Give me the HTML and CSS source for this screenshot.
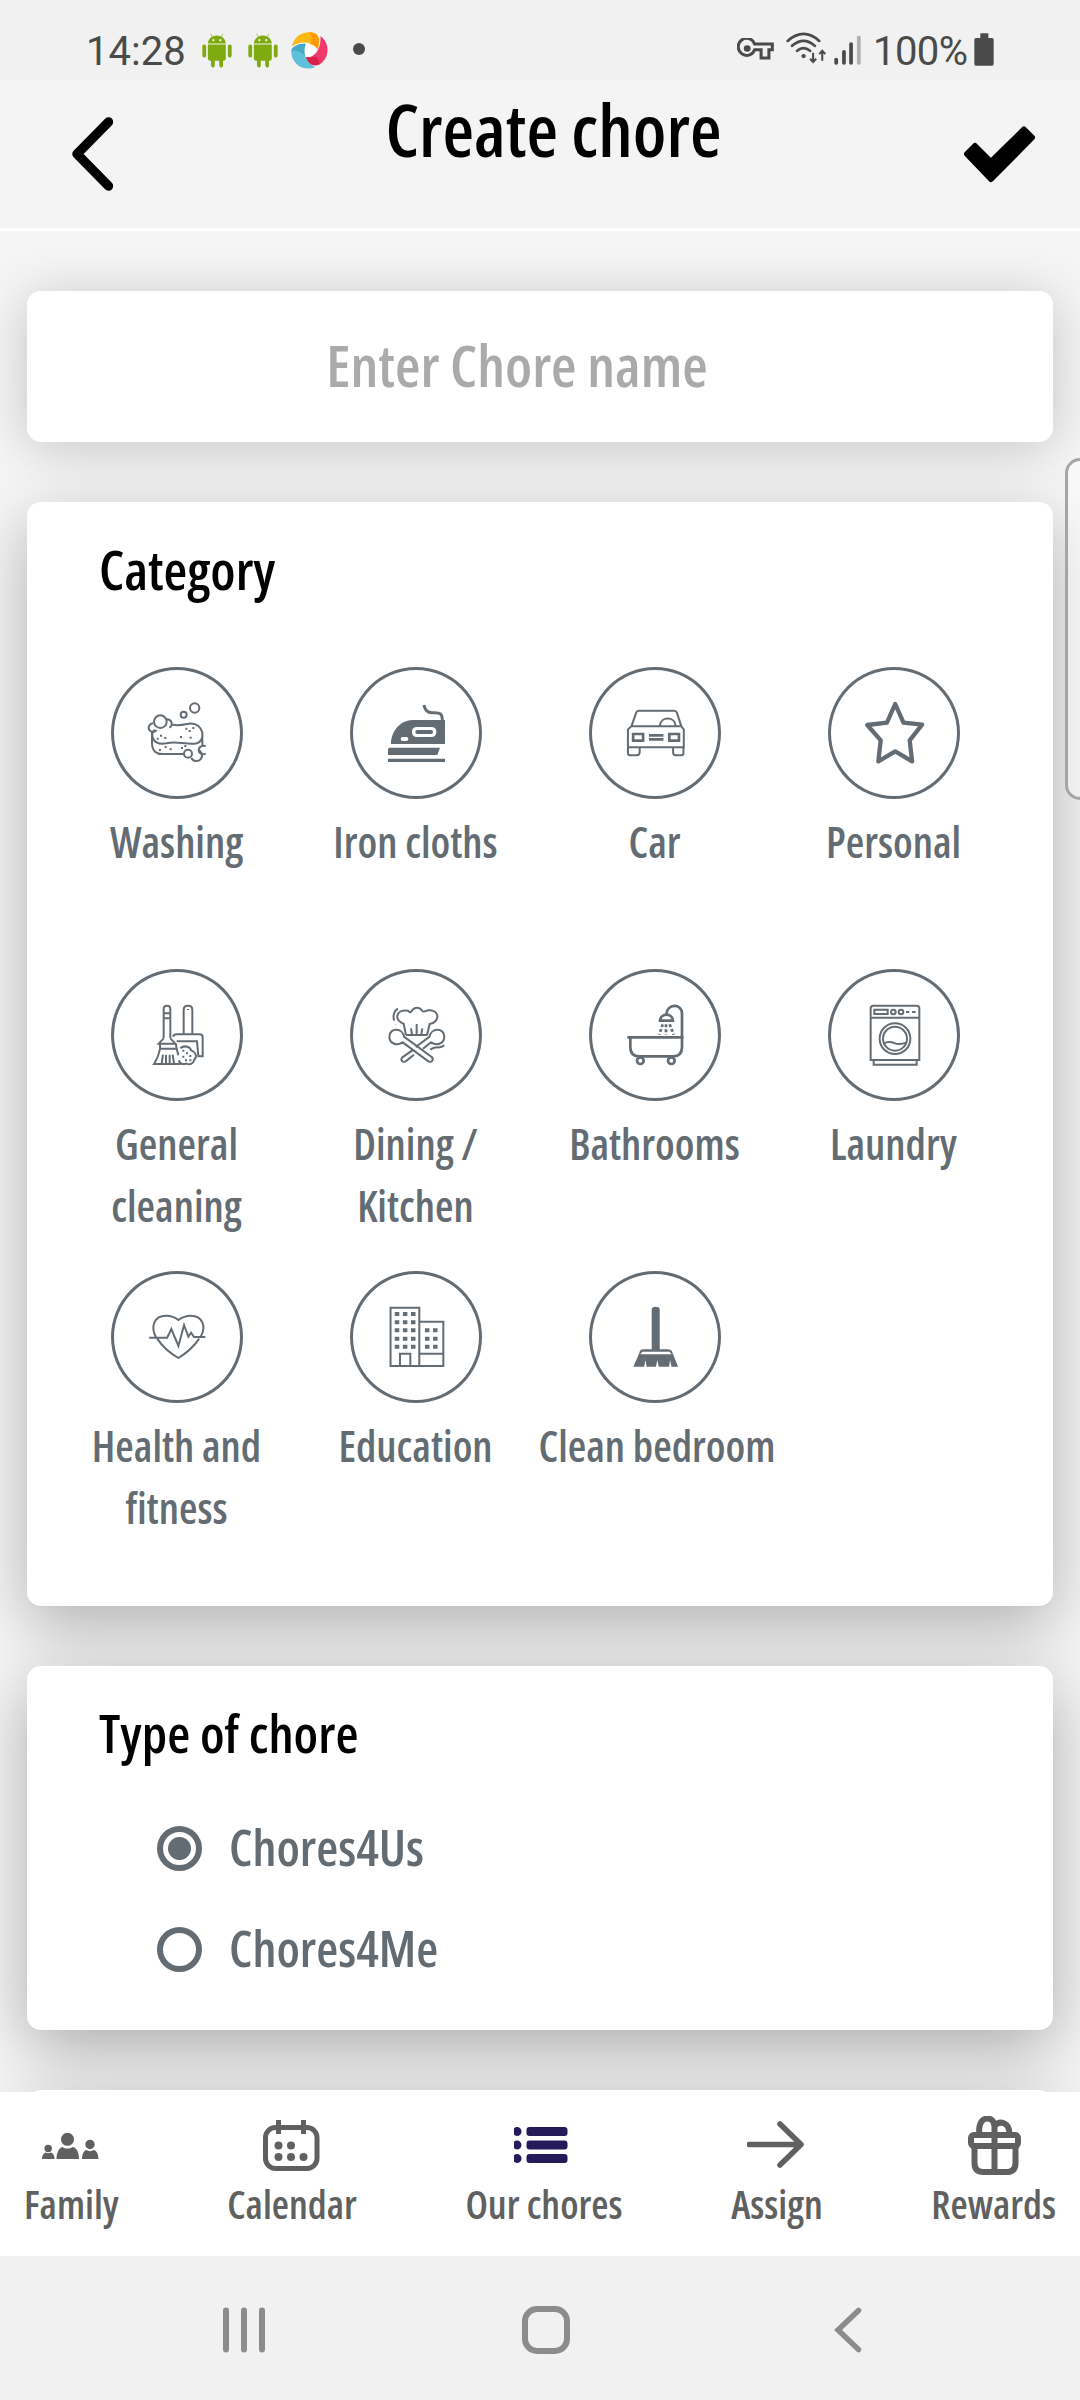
FILE: index.html
```
<!DOCTYPE html>
<html lang="en">
<head>
<meta charset="utf-8">
<title>Create chore</title>
<link rel="stylesheet" href="styles.css">
</head>
<body>
<div class="screen">
  <div class="statusbar">
    <span class="clock">14:28</span>
    <svg class="st-android" viewBox="587 98 87 103" preserveAspectRatio="none"><g fill="#80ab10"><path d="M604 129c2-32 50-32 52 0z"/><path d="M604 132h52v41q0 7-7 7h-1v14q0 6-5 6t-6-6v-14h-13v14q0 6-5 6t-6-6v-14h-2q-7 0-7-7z"/><rect x="588" y="132" width="11" height="38" rx="5"/><rect x="662" y="132" width="11" height="38" rx="5"/></g><path d="M612 100l5 9M648 100l-5 9" stroke="#80ab10" stroke-width="2"/><circle cx="620" cy="119" r="3" fill="#fff"/><circle cx="640" cy="119" r="3" fill="#fff"/></svg>
    <svg class="st-android st-android-2" viewBox="587 98 87 103" preserveAspectRatio="none"><g fill="#80ab10"><path d="M604 129c2-32 50-32 52 0z"/><path d="M604 132h52v41q0 7-7 7h-1v14q0 6-5 6t-6-6v-14h-13v14q0 6-5 6t-6-6v-14h-2q-7 0-7-7z"/><rect x="588" y="132" width="11" height="38" rx="5"/><rect x="662" y="132" width="11" height="38" rx="5"/></g><path d="M612 100l5 9M648 100l-5 9" stroke="#80ab10" stroke-width="2"/><circle cx="620" cy="119" r="3" fill="#fff"/><circle cx="640" cy="119" r="3" fill="#fff"/></svg>
    <svg class="st-swirl" viewBox="844 95 108 109" preserveAspectRatio="none"><circle cx="898" cy="150" r="40" fill="#fff"/><path d="M847 137c5-25 25-42 53-41 17 1 26 10 26 25 0 9-2 19-4 26-8-19-45-31-75-10z" fill="#fdb813"/><path d="M895 96c21-2 31 10 31 25 0 9-2 19-4 26-4-9-12-14-23-17 9-11 7-26-4-34z" fill="#ff9a04"/><path d="M930 107c30 22 26 68-4 84-17 8-37-2-38-22 20 4 45-18 42-62z" fill="#f0386b"/><path d="M888 169c12 4 24-3 32 1 6 6 5 15 8 20-19 8-39-1-40-21z" fill="#d81f4a"/><path d="M845 150c2-11 21-22 42-20-11 26 0 54 28 69-36 14-72-12-70-49z" fill="#5fc0da"/><path d="M845 150c2-11 21-22 42-20-6 14-5 25-1 35-13-11-24-18-41-15z" fill="#45aac4"/></svg>
    <span class="st-dot"></span>
    <span class="st-gap"></span>
    <svg class="st-key" viewBox="568 115 109 67" preserveAspectRatio="none"><path d="M620 133h52v18h-10v25h-23v-25h-19a25 26 0 1 1 0-18z" fill="none" stroke="#4a4a4a" stroke-width="9"/><circle cx="598" cy="147" r="10" fill="#4a4a4a"/></svg>
    <svg class="st-wifi" viewBox="709 97 121 97" preserveAspectRatio="none"><g fill="none" stroke="#4a4a4a" stroke-width="8" stroke-linecap="round"><path d="M714 124q47-42 93 0M727 139q34-30 67 0M742 154q18-16 38 0"/></g><circle cx="761" cy="170" r="6.500" fill="#4a4a4a"/><path d="M789 160v26M780 178l9 10 9-10M816 184v-28M807 164l9-10 9 10" fill="none" stroke="#4a4a4a" stroke-width="6"/></svg>
    <svg class="st-signal" viewBox="850 104 80 90" preserveAspectRatio="none"><g fill="#4a4a4a"><rect x="851" y="172" width="11" height="21" rx="5"/><rect x="874" y="149" width="11" height="44" rx="5"/><rect x="895" y="126" width="11" height="67" rx="5"/><rect x="918" y="106" width="11" height="87" rx="5" fill="#b0b0b0"/></g></svg>
    <span class="percent">100%</span>
    <svg class="st-battery" viewBox="1259 98 60 98" preserveAspectRatio="none"><path d="M1278 99h24v14h11q5 0 5 5v72q0 5-5 5h-48q-5 0-5-5v-72q0-5 5-5h13z" fill="#4a4a4a"/></svg>
  </div>

  <header class="header">
    <svg class="back" viewBox="72 114 44 80"><path d="M108.500 122L77 154l31.500 32" fill="none" stroke="#000" stroke-width="9.500" stroke-linecap="round" stroke-linejoin="round"/></svg>
    <h1 class="title">Create chore</h1>
    <svg class="check" viewBox="964 124 72 62"><path d="M967 154l8-8 16 16 33-32.500 8 8L991 179z" stroke="#000" stroke-width="6" stroke-linejoin="round"/></svg>
  </header>

  <main class="content">
    <section class="card card-name"><span class="placeholder">Enter Chore name</span></section>

    <section class="card card-category">
      <h2 class="heading">Category</h2>
      <div class="grid">
        <div class="cell"><div class="ring"><svg viewBox="93 81 396 396">
          <circle cx="344" cy="204" r="14"/><circle cx="311" cy="224" r="9"/><circle cx="241" cy="245" r="19"/><path d="M259 238c17 0 22 18 9 25M219 250a13 13 0 1 0 11 20"/>
          <path d="M277 254c19 4 34 0 49-3 50-5 54 58 18 60-32 2-56-8-84-1-46 9-51-34-35-40M216 276v34c0 22 13 34 35 32h60M367 279v36"/>
          <circle cx="324" cy="341" r="12"/><path d="M334 354a17 17 0 1 0 20-24M377 318c-15-4-25 8-19 19 4 5 12 7 19 4"/>
          <path class="dots" d="M319 266h0M329 273h0M340 264h0M303 291h0M332 293h0M243 287h0M233 296h0M256 294h0M257 321h0M240 330h0M272 328h0M306 324h0M316 318h0"/></svg></div><span class="label">Washing</span></div>
        <div class="cell"><div class="ring"><svg viewBox="810 81 396 396">
          <path class="fill" d="M933 312c0-38 28-72 65-72h97v72zM928 323h152l-8 22H924v-18zM924 356h171v10H924z"/><path class="w3" d="M1032 195c3 17 12 24 27 23 22-1 28 3 28 25"/><rect class="paper" x="996" y="261" width="73" height="30" rx="14"/><rect class="fill" x="1006" y="270" width="53" height="12" rx="6"/><rect class="paper" x="962" y="291" width="23" height="12" rx="6"/></svg></div><span class="label">Iron cloths</span></div>
        <div class="cell"><div class="ring"><svg viewBox="142 81 383 396" preserveAspectRatio="none">
          <path d="M265 259l14-41q2-6 7-6h103q6 0 8 6l13 41M265 259h145l7 9v54H255v-54zM348 256c2-27 43-27 45 0M255 322v18q0 6 6 6h19q9 0 9-9v-15M416 322v18q0 6-6 6h-16q-8 0-8-9v-15"/><path class="w2" d="M270 282h29v20h-29zM375 282h28v20h-28zM316 286h42M316 298h42"/></svg></div><span class="label">Car</span></div>
        <div class="cell"><div class="ring"><svg viewBox="836 81 383 396" preserveAspectRatio="none">
          <path class="w4" d="M1031 192l24 56 54 6-36 47 7 63-49-30-49 30 7-63-39-46 57-7z"/></svg></div><span class="label">Personal</span></div>

        <div class="cell"><div class="ring"><svg viewBox="93 87 396 396">
          <path d="M251 295v-88q0-10 10-10t10 10v88M251 220h20M251 235h20M251 295l-15 16h50l-15-16M240 311v15h50l-3-15M240 326c-4 20-10 34-18 46h80M249 344l-4 26M258 344v26M269 344v26M278 344l4 26M290 326l5 20"/>
          <path d="M311 283v-74q0-12 13-12t13 12v74M324 207v3M279 290q2-7 10-7h70q9 0 9 9v57h-13l-4-45h-61"/>
          <path d="M301 325c14-12 31-3 32 6 18 6 17 22 10 28-4 14-14 16-24 12-14 4-20-2-23-10"/><path class="dots" d="M310 332h0M321 340h0M331 348h0M310 350h0M318 361h0M331 361h0"/></svg></div><span class="label">General cleaning</span></div>
        <div class="cell"><div class="ring"><svg viewBox="810 87 396 396">
          <path d="M978 285l-7-34c-28-8-27-44 13-39 8 10 10 2 14-3 7-8 19-8 26 0 6 11 10 4 21 2 35-3 36 36 4 41l-8 34M978 285h64M993 265l3 18M1010 252v30M1027 265l-3 18M954 206c-13 6-16 25-11 36M947 252v1M1093 316c-14 13-22-1-42 13"/>
          <path d="M972 290c-3-26-43-29-44 0 1 23 24 28 40 17l77 57c10 5 18-5 10-13zM1049 290c3-26 43-29 44 0-1 23-24 28-40 17l-24 19M1049 290l-42 31M1002 344l-25 20c-10 5-17-5-10-12l30-21"/></svg></div><span class="label">Dining / Kitchen</span></div>
        <div class="cell"><div class="ring"><svg viewBox="147 87 396 396">
          <path class="w2" d="M262 292h169M271 293v28q0 28 27 28h102q26 0 26-28V220c0-30-46-30-47 3"/><path class="w2" d="M360 242c2-24 37-24 39 0z"/><circle class="w2" cx="301" cy="362" r="10"/><circle class="w2" cx="394" cy="362" r="10"/><path class="w2 dash" d="M368 253l-10 31M378 253v31M389 253l12 31"/></svg></div><span class="label">Bathrooms</span></div>
        <div class="cell"><div class="ring"><svg viewBox="864 87 396 396">
          <path d="M992 360V205q0-8 8-8h130q8 0 8 8v155zM992 233h146M1001 362v12h129v-12M1098 216h10M1116 216h11"/><rect x="1003" y="209" width="40" height="13"/><circle cx="1060" cy="216" r="7"/><circle cx="1083" cy="216" r="7"/><circle cx="1065" cy="296" r="46"/><circle cx="1065" cy="296" r="36"/><path d="M1030 311c14-8 25-5 35-1s20 3 36-3"/></svg></div><span class="label">Laundry</span></div>

        <div class="cell"><div class="ring"><svg viewBox="66 63 280 396" preserveAspectRatio="none">
          <path d="M162 263c-13-33-5-66 21-66q15 0 26 13 12-13 26-13c25 0 34 32 21 64M164 266q17 36 45 58 28-24 44-58M147 263h38l9-26 15 51 12-63 9 35 6-12 6 13h24"/></svg></div><span class="label">Health and fitness</span></div>
        <div class="cell"><div class="ring"><svg viewBox="572 63 280 396" preserveAspectRatio="none">
          <path d="M658 173h61v175h-61zM719 215h51v133h-51zM719 311h51M678 348v-37h22v37"/>
          <path class="panes" d="M667 192h46M667 217h46M667 241h46M667 266h46M667 290h46"/><path class="panes" d="M731 241h28M731 266h28M731 290h28"/></svg></div><span class="label">Education</span></div>
        <div class="cell"><div class="ring"><svg viewBox="1079 63 280 396" preserveAspectRatio="none">
          <path class="fill" d="M1212 298V178c0-10 17-10 17 0v120h16q9 0 11 10l12 42h-14l-3-20-2 20h-22l-3-20-3 20h-20l-2-20-3 20h-23l13-42q1-10 9-10z"/><path class="paper" d="M1192 305h58l4 8h-66z"/></svg></div><span class="label label-wide">Clean bedroom</span></div>
      </div>
    </section>

    <section class="card card-type">
      <h2 class="heading heading-type">Type of chore</h2>
      <div class="option"><span class="radio radio-on"></span><span class="option-text">Chores4Us</span></div>
      <div class="option"><span class="radio"></span><span class="option-text">Chores4Me</span></div>
    </section>

    <section class="card card-next"></section>
    <div class="edge-handle"></div>
  </main>

  <nav class="tabs">
    <div class="tab"><svg viewBox="41 2116 60 60"><g fill="#606060"><circle cx="67.500" cy="2139.300" r="6.500"/><path d="M56.500 2159c0-8 4-12 6-12 3 2 7 2 10 0 3 0 6.500 4 6.500 12z"/><circle cx="48.200" cy="2148.500" r="3.700"/><path d="M42 2159c0-4 2-6 3.500-6.500 2 1 3.500 1 5.500 0 2 .5 3.500 3 3.500 6.500zM82 2159c0-6 3-9 4.500-9 2 1.500 5 1.500 7 0 2 0 5 3 5 9z"/><circle cx="90" cy="2144.500" r="4.700"/></g></svg><span class="tab-text">Family</span></div>
    <div class="tab"><svg viewBox="262 2116 60 60"><rect x="265.500" y="2127.500" width="51.500" height="41" rx="10" fill="none" stroke="#606060" stroke-width="5"/><path d="M278.500 2120v14M303.500 2120v14" stroke="#606060" stroke-width="5"/><g fill="#606060"><circle cx="278.500" cy="2145.500" r="4"/><circle cx="291" cy="2145.500" r="4"/><circle cx="278.500" cy="2157" r="4"/><circle cx="291" cy="2157" r="4"/><circle cx="303.500" cy="2157" r="4"/></g></svg><span class="tab-text">Calendar</span></div>
    <div class="tab"><svg viewBox="514.500 2116 60 60"><g fill="#251b5a"><circle cx="517.500" cy="2131.500" r="4.500"/><circle cx="517.500" cy="2145" r="4.500"/><circle cx="517.500" cy="2158.500" r="4.500"/><rect x="527" y="2127" width="41" height="9" rx="3"/><rect x="527" y="2140.500" width="41" height="9" rx="3"/><rect x="527" y="2154" width="41" height="9" rx="3"/></g></svg><span class="tab-text">Our chores</span></div>
    <div class="tab"><svg viewBox="746 2116 60 60"><path d="M748 2144.500h52M779 2124l21 20.500-21 20.500" fill="none" stroke="#606060" stroke-width="5.500" stroke-linejoin="round" stroke-linecap="round"/></svg><span class="tab-text">Assign</span></div>
    <div class="tab"><svg viewBox="964.500 2116 60 60"><g fill="none" stroke="#606060" stroke-width="6"><rect x="971.500" y="2135" width="47" height="11" rx="3"/><path d="M975 2146v17q0 9 9 9h23q9 0 9-9v-17M995 2134v38M980 2134c-3-18 14-20 15-8v8M995 2126c5-6 15-4 15 8"/></g></svg><span class="tab-text">Rewards</span></div>
  </nav>

  <div class="sysnav">
    <svg viewBox="214 2300 60 60"><path d="M226 2310.500v39M244 2310.500v39M262 2310.500v39" stroke="#8c8c8c" stroke-width="6" stroke-linecap="round"/></svg>
    <svg viewBox="516 2300 60 60"><rect x="525" y="2309" width="42" height="42" rx="12" fill="none" stroke="#8c8c8c" stroke-width="6"/></svg>
    <svg viewBox="818 2300 60 60"><path d="M858.500 2310.500L838 2330l20.500 19.500" fill="none" stroke="#8c8c8c" stroke-width="5.500" stroke-linecap="round"/></svg>
  </div>
</div>
</body>
</html>
```
FILE: styles.css
```
* { box-sizing: border-box; }
body { margin: 0; }
svg { display: block; flex: none; }
h1, h2 { margin: 0; font-weight: 550; }

.screen {
  width: 1080px;
  height: 2400px;
  overflow: hidden;
  display: flex;
  flex-direction: column;
  background: #f5f5f5;
  font-family: "Open Sans", sans-serif;
  font-stretch: 75%;
  font-weight: 550;
  white-space: nowrap;
}

/* status bar */
.statusbar {
  height: 80px;
  flex: none;
  display: flex;
  align-items: flex-start;
  padding: 32px 86px 0 86px;
  background: #f1f1f1;
  color: #4a4a4a;
  font: 40px/40px Roboto, sans-serif;
}
.clock { width: 116px; }
.st-android { width: 30px; height: 35px; margin-top: 1px; }
.st-android-2 { margin-left: 16px; }
.st-swirl { width: 37px; height: 37px; margin: 0 0 0 13px; }
.st-dot { width: 12px; height: 12px; border-radius: 50%; background: #4a4a4a; margin: 11px 0 0 25px; }
.st-gap { flex: 1; }
.st-key { width: 37px; height: 22px; margin: 6px 12px 0 0; }
.st-wifi { width: 41px; height: 32px; margin: 0 7px 0 0; }
.st-signal { width: 27px; height: 30px; margin: 3px 12px 0 0; }
.percent { width: 101px; letter-spacing: -0.6px; }
.st-battery { width: 20px; height: 33px; margin-top: 1px; }

/* app header */
.header {
  height: 151px;
  flex: none;
  display: flex;
  justify-content: space-between;
  padding: 0 44px 0 72px;
  background: #f4f4f4;
  border-bottom: 3px solid #fff;
}
.back { width: 44px; height: 80px; margin-top: 34px; }
.title { font-size: 72.5px; line-height: 98px; padding-left: 27px; color: #000; }
.check { width: 72px; height: 62px; margin-top: 44px; }

/* content */
.content {
  position: relative;
  height: 1861px;
  flex: none;
  overflow: hidden;
  display: flex;
  flex-direction: column;
  gap: 60px;
  padding: 60px 27px 0;
}
.card {
  flex: none;
  background: #fff;
  border-radius: 14px;
  box-shadow: 0 18px 64px rgba(0, 0, 0, 0.3);
}
.card-name {
  height: 151px;
  display: flex;
  align-items: center;
  justify-content: center;
  padding: 0 46px 6px 0;
  box-shadow: 0 6px 54px rgba(0, 0, 0, 0.2);
}
.placeholder { font-size: 58.5px; color: #aaa; }
.card-category {
  height: 1104px;
  padding: 37px 30px 0;
  box-shadow: 0 20px 64px rgba(0, 0, 0, 0.28);
}
.card-type { height: 364px; padding: 37px 30px 0; }
.card-next { height: 300px; }
.heading { font-size: 54.5px; line-height: 60px; padding-left: 42px; color: #000; }
.heading-type { font-size: 53px; margin-bottom: 35px; }

.grid {
  display: grid;
  grid-template-columns: repeat(4, 239px);
  grid-auto-rows: 302px;
  margin-top: 68px;
}
.cell { display: flex; flex-direction: column; align-items: center; color: #646c73; }
.ring {
  width: 132px;
  height: 132px;
  border-radius: 50%;
  box-shadow: inset 0 0 0 3px #646c73;
}
.ring svg { width: 132px; height: 132px; fill: none; stroke: #646c73; stroke-width: 2px; }
.ring svg * { vector-effect: non-scaling-stroke; }
.ring .w2 { stroke-width: 2.7px; }
.ring .w3 { stroke-width: 3px; }
.ring .w4 { stroke-width: 4.3px; stroke-linejoin: round; }
.ring .fill { fill: #646c73; stroke: none; }
.ring .paper { fill: #fff; stroke: none; }
.ring .dots { stroke-width: 2px; stroke-linecap: square; }
.ring .dash { stroke-dasharray: 3 2; }
.ring .panes { stroke-width: 4px; stroke-dasharray: 4.5 3.6; }
.label {
  width: 232px;
  padding: 0 29px;
  margin-top: 12px;
  font-size: 42.5px;
  line-height: 62px;
  text-align: center;
  white-space: normal;
}
.label-wide { padding: 0; white-space: nowrap; }

.option { height: 101px; display: flex; align-items: center; padding-left: 100px; color: #646c73; }
.radio {
  width: 45px;
  height: 45px;
  border: 6px solid #646c73;
  border-radius: 50%;
  background: #fff;
}
.radio-on { background: radial-gradient(circle, #646c73 11px, #fff 12px); }
.option-text { font-size: 50.5px; line-height: 60px; padding: 0 0 4px 27px; }

.edge-handle {
  position: absolute;
  left: 1065px;
  top: 227px;
  width: 30px;
  height: 342px;
  border: 3px solid #a5a5a5;
  border-radius: 15px;
  background: rgba(255, 255, 255, 0.4);
}

/* tabs */
.tabs {
  height: 164px;
  flex: none;
  display: flex;
  justify-content: space-between;
  padding: 24px 24px 0;
  background: #fff;
  color: #606060;
}
.tab { display: flex; flex-direction: column; align-items: center; }
.tab svg { width: 60px; height: 60px; }
.tab-text { font-size: 39.5px; line-height: 50px; margin-top: 3px; }

.sysnav {
  height: 144px;
  flex: none;
  display: flex;
  justify-content: center;
  gap: 242px;
  padding: 44px 0 0 12px;
  background: #f1f1f1;
}
.sysnav svg { width: 60px; height: 60px; }
```
